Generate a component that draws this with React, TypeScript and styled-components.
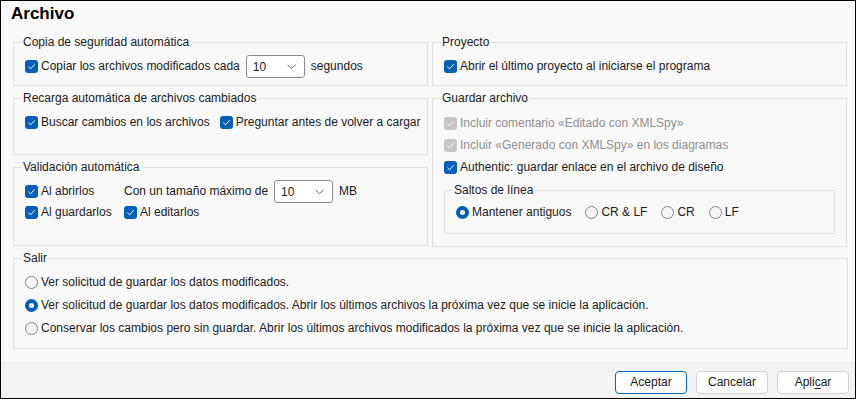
import React from "react";
import styled, { createGlobalStyle } from "styled-components";

const Global = createGlobalStyle`
  html, body { margin: 0; padding: 0; background: #ffffff; }
  * { box-sizing: border-box; }
  body { font-family: "Liberation Sans", Arial, sans-serif; font-size: 12px; color: #1b1b1b; }
`;

const Window = styled.div`
  width: 856px;
  height: 399px;
  border: 1px solid #000;
  background: #f9f9f9;
  display: flex;
  flex-direction: column;
`;

const Body = styled.div`
  flex: 1;
  padding: 0 7px 0 12px;
  display: flex;
  flex-direction: column;
`;

const Title = styled.h1`
  margin: 0;
  padding: 3px 0 0 0;
  height: 34px;
  font-size: 17px;
  line-height: 20px;
  font-weight: 700;
  color: #000;
  text-indent: -2px;
`;

const Columns = styled.div`
  display: grid;
  grid-template-columns: 415px 415px;
  column-gap: 4px;
`;

const Column = styled.div`
  display: flex;
  flex-direction: column;
  gap: 5px;
`;

const Group = styled.fieldset<{ $pt?: number; $pb?: number; $px?: number }>`
  margin: 0;
  min-width: 0;
  border: 1px solid #dfdfdf;
  border-radius: 0;
  padding: ${(p) => p.$pt ?? 5}px ${(p) => p.$px ?? 11}px ${(p) => p.$pb ?? 7}px;
  display: flex;
  flex-direction: column;
`;

const Legend = styled.legend`
  padding: 0 1px;
  margin-left: -3px;
  font-size: 12px;
  line-height: 15px;
  color: #1b1b1b;
`;

const Row = styled.div<{ $h?: number; $gap?: number }>`
  display: flex;
  align-items: center;
  height: ${(p) => p.$h ?? 22}px;
  gap: ${(p) => p.$gap ?? 6}px;
  white-space: nowrap;
`;

const Grid2 = styled.div`
  display: grid;
  grid-template-columns: 99px auto;
  grid-auto-rows: auto;
  align-items: center;
`;

const Label = styled.label<{ $disabled?: boolean }>`
  display: inline-flex;
  align-items: center;
  gap: 3px;
  line-height: 15px;
  white-space: nowrap;
  color: ${(p) => (p.$disabled ? "#8f8f8f" : "#1b1b1b")};
`;

const Box = styled.span<{ $disabled?: boolean }>`
  width: 13px;
  height: 13px;
  border-radius: 3px;
  background: ${(p) => (p.$disabled ? "#c6c6c6" : "#005fb8")};
  display: inline-flex;
  align-items: center;
  justify-content: center;
  flex: none;
`;

const Radio = styled.span<{ $on?: boolean }>`
  width: 13px;
  height: 13px;
  border-radius: 50%;
  flex: none;
  box-sizing: border-box;
  ${(p) =>
    p.$on
      ? `border: 4px solid #005fb8; box-shadow: inset 0 0 0 1.5px #ffffff; background: #ffffff;`
      : `background: #f6f6f6; border: 1px solid #868686;`}
`;

const Text = styled.span`
  line-height: 15px;
  white-space: nowrap;
`;

const Combo = styled.div<{ $w?: number }>`
  width: ${(p) => p.$w ?? 59}px;
  height: 23px;
  border: 1px solid #8a8a8a;
  border-radius: 3px;
  background: #ffffff;
  display: flex;
  align-items: center;
  justify-content: space-between;
  padding: 0 8px 0 6px;
  flex: none;
`;

const Footer = styled.div`
  height: 36px;
  border-top: 1px solid #e6e6e6;
  background: #f3f3f3;
  display: flex;
  justify-content: flex-end;
  align-items: flex-start;
  gap: 9px;
  padding: 8px 6px 0 0;
`;

const Button = styled.button<{ $primary?: boolean }>`
  width: 72px;
  height: 23px;
  border-radius: 4px;
  border: 1px solid ${(p) => (p.$primary ? "#0067c0" : "#d2d2d2")};
  background: #fdfdfd;
  font-family: "Liberation Sans", Arial, sans-serif;
  font-size: 12px;
  color: #1b1b1b;
  padding: 0;
  line-height: 15px;
`;

const U = styled.span`
  text-decoration: underline;
  text-underline-offset: 2px;
`;

const InnerWrap = styled.div`
  margin-top: 5px;
`;

const SalirWrap = styled.div`
  margin-top: 4px;
`;

const Check: React.FC<{ label: React.ReactNode; disabled?: boolean }> = ({ label, disabled }) => (
  <Label $disabled={disabled}>
    <Box $disabled={disabled}>
      <svg width="13" height="13" viewBox="0 0 13 13">
        <path d="M3.6 6.9 L5.6 8.8 L9.4 4.6" fill="none" stroke="#ffffff" strokeWidth="1" strokeLinecap="round" strokeLinejoin="round" />
      </svg>
    </Box>
    {label}
  </Label>
);

const Opt: React.FC<{ label: string; on?: boolean }> = ({ label, on }) => (
  <Label>
    <Radio $on={on} />
    {label}
  </Label>
);

const Select: React.FC<{ value: string }> = ({ value }) => (
  <Combo>
    <span>{value}</span>
    <svg width="9" height="6" viewBox="0 0 9 6">
      <path d="M0.5 0.8 L4.5 4.8 L8.5 0.8" fill="none" stroke="#5c5c5c" strokeWidth="1" />
    </svg>
  </Combo>
);

export default function App() {
  return (
    <>
      <Global />
      <Window>
        <Body>
          <Title>Archivo</Title>
          <Columns>
            <Column>
              <Group $pt={5} $pb={7}>
                <Legend>Copia de seguridad automática</Legend>
                <Row $h={23}>
                  <Check label="Copiar los archivos modificados cada" />
                  <Select value="10" />
                  <Text>segundos</Text>
                </Row>
              </Group>
              <Group $pt={7} $pb={23}>
                <Legend>Recarga automática de archivos cambiados</Legend>
                <Row $h={18} $gap={10}>
                  <Check label="Buscar cambios en los archivos" />
                  <Check label="Preguntar antes de volver a cargar" />
                </Row>
              </Group>
              <Group $pt={5} $pb={23}>
                <Legend>Validación automática</Legend>
                <Grid2>
                  <Check label="Al abrirlos" />
                  <Row $h={23}>
                    <Text>Con un tamaño máximo de</Text>
                    <Select value="10" />
                    <Text>MB</Text>
                  </Row>
                  <Row $h={19}>
                    <Check label="Al guardarlos" />
                  </Row>
                  <Row $h={19}>
                    <Check label="Al editarlos" />
                  </Row>
                </Grid2>
              </Group>
            </Column>
            <Column>
              <Group $pt={5} $pb={7}>
                <Legend>Proyecto</Legend>
                <Row $h={23}>
                  <Check label="Abrir el último proyecto al iniciarse el programa" />
                </Row>
              </Group>
              <Group $pt={6} $pb={12} $px={11}>
                <Legend>Guardar archivo</Legend>
                <Row $h={22}>
                  <Check disabled label="Incluir comentario «Editado con XMLSpy»" />
                </Row>
                <Row $h={22}>
                  <Check disabled label="Incluir «Generado con XMLSpy» en los diagramas" />
                </Row>
                <Row $h={22}>
                  <Check label="Authentic: guardar enlace en el archivo de diseño" />
                </Row>
                <InnerWrap>
                  <Group $pt={3} $pb={10}>
                    <Legend>Saltos de línea</Legend>
                    <Row $h={22} $gap={14}>
                      <Opt on label="Mantener antiguos" />
                      <Opt label="CR & LF" />
                      <Opt label="CR" />
                      <Opt label="LF" />
                    </Row>
                  </Group>
                </InnerWrap>
              </Group>
            </Column>
          </Columns>
          <SalirWrap>
            <Group $pt={5} $pb={8}>
              <Legend>Salir</Legend>
              <Row $h={23}>
                <Opt label="Ver solicitud de guardar los datos modificados." />
              </Row>
              <Row $h={23}>
                <Opt on label="Ver solicitud de guardar los datos modificados. Abrir los últimos archivos la próxima vez que se inicie la aplicación." />
              </Row>
              <Row $h={23}>
                <Opt label="Conservar los cambios pero sin guardar. Abrir los últimos archivos modificados la próxima vez que se inicie la aplicación." />
              </Row>
            </Group>
          </SalirWrap>
        </Body>
        <Footer>
          <Button $primary>Aceptar</Button>
          <Button>Cancelar</Button>
          <Button>
            Apli<U>c</U>ar
          </Button>
        </Footer>
      </Window>
    </>
  );
}
